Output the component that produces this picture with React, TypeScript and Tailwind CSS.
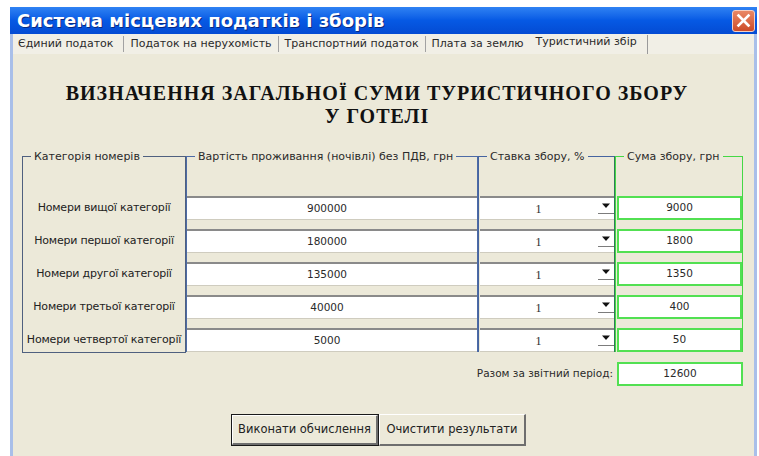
import React from "react";

const ui = { fontFamily: '"DejaVu Sans", Verdana, sans-serif' };
const serif = { fontFamily: '"Liberation Serif", "Times New Roman", serif' };

const rows = [
  { label: "Номери вищої категорії", cost: "900000", rate: "1", sum: "9000" },
  { label: "Номери першої категорії", cost: "180000", rate: "1", sum: "1800" },
  { label: "Номери другої категорії", cost: "135000", rate: "1", sum: "1350" },
  { label: "Номери третьої категорії", cost: "40000", rate: "1", sum: "400" },
  { label: "Номери четвертої категорії", cost: "5000", rate: "1", sum: "50" },
];

function Sep({ tall = false }: { tall?: boolean }) {
  return <span className={tall ? "w-px h-[19px] bg-[#9a9a9a] self-end" : "w-px h-[16px] bg-[#a2a2a2]"} />;
}

function Legend({ children }: { children: React.ReactNode }) {
  return (
    <legend className="ml-[8px] px-[3px] text-[11px] leading-[13px] text-[#2a2a2a] whitespace-nowrap">
      {children}
    </legend>
  );
}

export default function App() {
  return (
    <div className="w-[759px] h-[456px] bg-white overflow-hidden" style={ui}>
      <div className="ml-[10px] mt-[7px] w-[747px] h-[449px] flex flex-col">
        {/* title bar */}
        <div className="h-[27px] flex items-center justify-between pl-[7px] pr-[2px] bg-gradient-to-b from-[#2f82f3] via-[#0659e4] to-[#044bd3]">
          <span className="text-white font-bold text-[18px] leading-none [text-shadow:1px_1px_0_#0a2a80]">
            Система місцевих податків і зборів
          </span>
          <div className="w-[23px] h-[22px] rounded-[3px] border border-[#f4d0c4] bg-gradient-to-b from-[#e98866] to-[#cd4a28] flex items-center justify-center">
            <svg width="15" height="15" viewBox="0 0 15 15">
              <path d="M2.5 2.5 L12.5 12.5 M12.5 2.5 L2.5 12.5" stroke="white" strokeWidth="2.6" strokeLinecap="square" />
            </svg>
          </div>
        </div>

        {/* window body */}
        <div className="flex-1 bg-[#ece9d9] border-l-[3px] border-r-[3px] border-[#a9bfe9] flex flex-col">
          {/* tabs */}
          <div className="h-[20px] bg-[#f1efe6] flex items-center pl-[5px] text-[11px] text-[#2a2a2a] whitespace-nowrap">
            <span className="pr-[10px]">Єдиний податок</span>
            <Sep />
            <span className="px-[6px]">Податок на нерухомість</span>
            <Sep />
            <span className="px-[6px]">Транспортний податок</span>
            <Sep />
            <span className="pl-[6px] pr-[12px]">Плата за землю</span>
            <span className="pr-[10px] -mt-[3px]">Туристичний збір</span>
            <Sep tall />
          </div>

          {/* heading */}
          <div
            className="mt-[28px] pr-[13px] text-center font-bold text-[20px] leading-[23px] tracking-[1px] text-[#111]"
            style={serif}
          >
            <div>ВИЗНАЧЕННЯ ЗАГАЛЬНОЇ СУМИ ТУРИСТИЧНОГО ЗБОРУ</div>
            <div>У ГОТЕЛІ</div>
          </div>

          <div className="ml-[9px] w-[721px] mt-[22px] flex flex-col">
            {/* frames */}
            <div className="flex items-start">
              <fieldset className="w-[164px] border border-[#4f607f] pb-0">
                <Legend>Категорія номерів</Legend>
                <div className="pt-[33px] flex flex-col gap-[9px]">
                  {rows.map((r) => (
                    <div key={r.label} className="h-[24px] flex items-center justify-center text-[11px] tracking-[-0.2px] text-[#222] whitespace-nowrap">
                      {r.label}
                    </div>
                  ))}
                </div>
              </fieldset>

              <fieldset className="w-[292px] border border-[#4d6ba6] border-b-0">
                <Legend>Вартість проживання (ночівлі) без ПДВ, грн</Legend>
                <div className="pt-[33px] flex flex-col gap-[9px]">
                  {rows.map((r) => (
                    <div key={r.label} className="h-[24px] bg-white border-t-2 border-t-[#8a8a8a] border-b border-b-[#cfccbf] flex items-center justify-center pr-[10px] text-[10.5px] text-[#2a2a2a]">
                      {r.cost}
                    </div>
                  ))}
                </div>
              </fieldset>

              <fieldset className="w-[137px] border border-[#4564a0] border-r-[#2f7a58] border-b-0">
                <Legend>Ставка збору, %</Legend>
                <div className="pt-[33px] flex flex-col gap-[9px]">
                  {rows.map((r) => (
                    <div key={r.label} className="h-[24px] ml-px bg-white border-t-2 border-t-[#8a8a8a] border-b border-b-[#cfccbf] flex items-center text-[#2a2a2a]">
                      <span className="flex-1 text-center text-[12px]" style={serif}>{r.rate}</span>
                      <span className="w-[17px] h-full flex flex-col items-center justify-center">
                        <svg width="10" height="6" viewBox="0 0 10 6">
                          <path d="M1 0.5 H9 L5 5 Z" fill="#111" />
                        </svg>
                        <span className="w-[16px] h-px bg-[#7c7c7c] mt-[4px]" />
                      </span>
                    </div>
                  ))}
                </div>
              </fieldset>

              <fieldset className="w-[128px] border border-[#45d845] border-b-0">
                <Legend>Сума збору, грн</Legend>
                <div className="pt-[33px] flex flex-col gap-[9px]">
                  {rows.map((r) => (
                    <div key={r.label} className="h-[24px] ml-px bg-white border-2 border-[#52e052] flex items-center justify-center text-[10.5px] text-[#2a2a2a]">
                      {r.sum}
                    </div>
                  ))}
                </div>
              </fieldset>
            </div>

            {/* total */}
            <div className="mt-[9px] flex items-center justify-end gap-[4px]">
              <span className="text-[10.5px] text-[#2a2a2a]">Разом за звітний період:</span>
              <div className="w-[126px] h-[24px] bg-white border-2 border-[#52e052] flex items-center justify-center text-[10.5px] text-[#2a2a2a]">
                12600
              </div>
            </div>

            {/* actions */}
            <div className="mt-[28px] ml-[209px] flex">
              <button className="w-[148px] h-[32px] border border-[#1a1a1a] bg-[#ece9d9] p-0">
                <div className="w-full h-full border-t border-l border-t-white border-l-white border-b-2 border-r-2 border-b-[#6e6e6e] border-r-[#6e6e6e] flex items-center justify-center text-[11.5px] text-[#222]">
                  Виконати обчислення
                </div>
              </button>
              <button className="w-[147px] h-[32px] bg-[#ece9d9] border-t border-l border-t-white border-l-white border-b-2 border-r-2 border-b-[#6e6e6e] border-r-[#6e6e6e] flex items-center justify-center text-[11.5px] text-[#222]">
                Очистити результати
              </button>
            </div>
          </div>
        </div>
      </div>
    </div>
  );
}
